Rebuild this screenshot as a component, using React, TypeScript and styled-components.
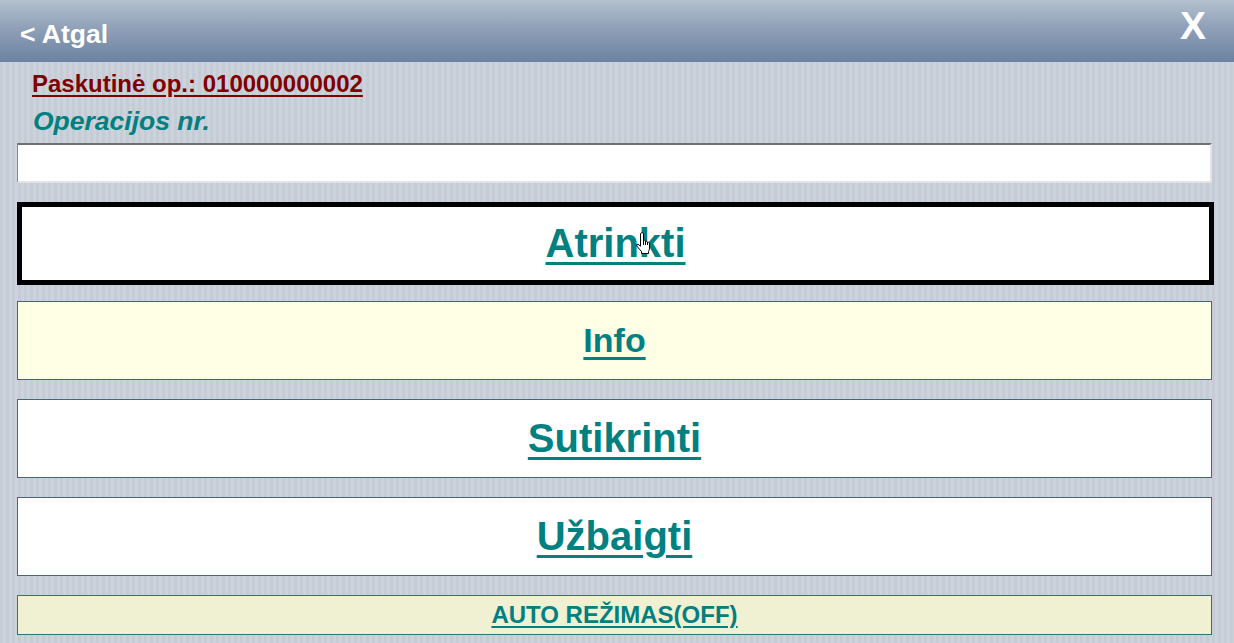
import styled, { createGlobalStyle } from "styled-components";

const GlobalStyle = createGlobalStyle`
  html, body {
    margin: 0;
    padding: 0;
  }
  body {
    font-family: "Liberation Sans", Arial, sans-serif;
    background: repeating-linear-gradient(
      90deg,
      #c5ccd5 0px,
      #c5ccd5 3px,
      #ccd3db 3px,
      #ccd3db 6px
    );
    min-height: 643px;
  }
`;

const TEAL = "#008080";

const Header = styled.header`
  height: 62px;
  display: flex;
  justify-content: space-between;
  align-items: flex-start;
  padding: 0 28px 0 20px;
  box-sizing: border-box;
  background: linear-gradient(180deg, #b4c0cf 0%, #8fa0b8 45%, #6c82a1 100%);
  color: #fff;
  font-weight: 700;
`;

const BackLink = styled.span`
  font-size: 26.5px;
  line-height: 30px;
  margin-top: 19px;
`;

const CloseButton = styled.span`
  font-size: 39px;
  line-height: 40px;
  margin-top: 6px;
`;

const Content = styled.main`
  width: 1195px;
  margin-left: 17px;
  display: flex;
  flex-direction: column;
  padding-top: 8px;
`;

const LastOp = styled.div`
  color: #800000;
  font-size: 24px;
  line-height: 28px;
  font-weight: 700;
  text-decoration: underline;
  text-decoration-thickness: 2px;
  text-underline-offset: 3px;
  margin-left: 15px;
  align-self: flex-start;
`;

const FieldLabel = styled.div`
  color: ${TEAL};
  font-size: 26.5px;
  line-height: 30px;
  font-weight: 700;
  font-style: italic;
  margin: 8px 0 0 16px;
`;

const TextInput = styled.input`
  height: 40px;
  box-sizing: border-box;
  margin-top: 7px;
  background: #fff;
  border-style: solid;
  border-width: 2px 2px 2px 1px;
  border-color: #707070 #e4e4e4 #e4e4e4 #8a8a8a;
  outline: none;
  font-family: inherit;
  font-size: 20px;
  padding: 0 6px;
`;

const ActionButton = styled.button<{ $bg?: string; $focused?: boolean; $height: number; $gap: number }>`
  position: relative;
  box-sizing: border-box;
  width: ${(p) => (p.$focused ? "1197px" : "1195px")};
  height: ${(p) => p.$height}px;
  margin-top: ${(p) => p.$gap}px;
  background: ${(p) => p.$bg ?? "#fff"};
  border: ${(p) => (p.$focused ? "5px solid #000" : "1px solid #207a7a")};
  display: flex;
  align-items: center;
  justify-content: center;
  padding: 0;
  cursor: pointer;
  font-family: "Liberation Sans", Arial, sans-serif;
`;

const ButtonText = styled.span<{ $size: number }>`
  color: ${TEAL};
  font-size: ${(p) => p.$size}px;
  font-weight: 700;
  text-decoration: underline;
  text-decoration-thickness: ${(p) => (p.$size > 30 ? 3 : 2)}px;
  text-underline-offset: ${(p) => (p.$size > 30 ? 5 : 3)}px;
`;

const Pointer = styled.svg`
  position: absolute;
  left: 613px;
  top: 24px;
  width: 17px;
  height: 24px;
`;

const HandCursor = () => (
  <Pointer viewBox="0 0 17 24">
    <path
      d="M5.5 2.5 Q7 0.5 8.5 2.5 L8.5 10 Q9.5 8.5 10.5 10 L10.5 11 Q11.5 9.5 12.5 11 L12.5 12 Q13.5 10.5 14.5 12 L14.5 17 Q14.5 19 13.5 20.5 L13.5 22.5 L6.5 22.5 L6.5 20.5 Q4.5 18.5 1.8 15 Q1 13 3 13.2 L5.5 15.2 Z"
      fill="#fff"
      stroke="#000"
      strokeWidth="1"
      strokeLinejoin="round"
    />
    <path d="M8.5 10 L8.5 14 M10.5 11 L10.5 14 M12.5 12 L12.5 14" stroke="#000" strokeWidth="1" fill="none" />
  </Pointer>
);

export default function App() {
  return (
    <>
      <GlobalStyle />
      <Header>
        <BackLink>&lt; Atgal</BackLink>
        <CloseButton>X</CloseButton>
      </Header>
      <Content>
        <LastOp>Paskutinė op.: 010000000002</LastOp>
        <FieldLabel>Operacijos nr.</FieldLabel>
        <TextInput type="text" />
        <ActionButton $focused $height={83} $gap={19}>
          <ButtonText $size={40}>Atrinkti</ButtonText>
          <HandCursor />
        </ActionButton>
        <ActionButton $bg="#ffffe6" $height={79} $gap={16}>
          <ButtonText $size={34}>Info</ButtonText>
        </ActionButton>
        <ActionButton $height={79} $gap={19}>
          <ButtonText $size={40}>Sutikrinti</ButtonText>
        </ActionButton>
        <ActionButton $height={79} $gap={19}>
          <ButtonText $size={40}>Užbaigti</ButtonText>
        </ActionButton>
        <ActionButton $bg="#f0f0d2" $height={40} $gap={19}>
          <ButtonText $size={24}>AUTO REŽIMAS(OFF)</ButtonText>
        </ActionButton>
      </Content>
    </>
  );
}
